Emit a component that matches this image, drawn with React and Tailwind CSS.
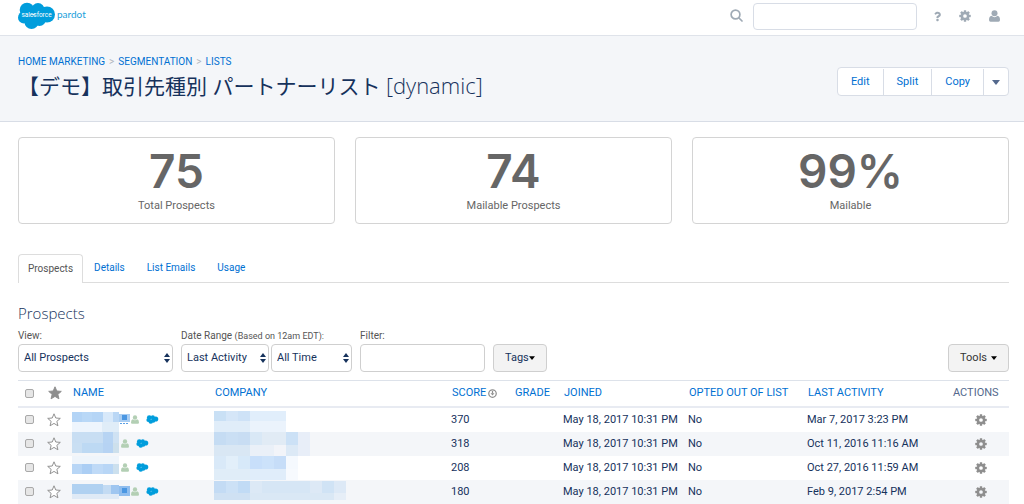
import React from 'react';
import { FaQuestion } from 'react-icons/fa';

const STATS = [
    { value: '75', label: 'Total Prospects' },
    { value: '74', label: 'Mailable Prospects' },
    { value: '99%', label: 'Mailable' }
];

const TABS = ['Details', 'List Emails', 'Usage'];

const GEAR_TEETH = [0, 45, 90, 135, 180, 225, 270, 315];

// Pixelated placeholders: each block is [x, y, width, height, color]
const PROSPECTS = [
    {
        score: 370,
        opted: 'No',
        joined: 'May 18, 2017 10:31 PM',
        lastActivity: 'Mar 7, 2017 3:23 PM',
        nameWidth: 58,
        name: [
            [0, 4, 10, 10, '#b3d4f6'], [10, 4, 10, 10, '#b9d8f7'], [20, 4, 11, 10, '#b5d5f6'],
            [31, 4, 10, 10, '#d8e9fa'], [41, 4, 6, 10, '#bad7f5'], [0, 14, 30, 10, '#eef5fd'],
            [30, 14, 17, 10, '#e0edf8'], [47, 6, 11, 8, '#a9cdf2'], [50, 7, 5, 5, '#4b97e2'],
            [48, 15, 2, 1, '#5a9fe4'], [51, 15, 2, 1, '#5a9fe4'], [54, 15, 2, 1, '#5a9fe4']
        ],
        company: [
            [0, 3, 12, 10, '#c9e0f5'], [12, 3, 12, 10, '#d5e6f8'], [24, 3, 12, 10, '#cee2f7'],
            [36, 3, 36, 10, '#e1eefb'], [0, 13, 36, 11, '#e0edf9'], [36, 13, 36, 11, '#ebf3fc']
        ]
    },
    {
        score: 318,
        opted: 'No',
        joined: 'May 18, 2017 10:31 PM',
        lastActivity: 'Oct 11, 2016 11:16 AM',
        nameWidth: 48,
        name: [
            [0, 0, 31, 11, '#c8def3'], [31, 0, 10, 11, '#b7d4f3'], [41, 0, 6, 11, '#cfe2f3'],
            [0, 11, 10, 10, '#c9dff3'], [10, 11, 21, 10, '#bdd9f3'], [31, 11, 10, 10, '#b6d3f3'],
            [41, 11, 6, 10, '#cde0ec']
        ],
        company: [
            [0, 0, 12, 13, '#c5dcf3'], [12, 0, 12, 13, '#cadff4'], [24, 0, 12, 13, '#c8ddf3'],
            [36, 0, 12, 13, '#d9e8f6'], [48, 0, 24, 13, '#e1ebf5'], [72, 0, 12, 13, '#cce1f6'],
            [84, 0, 12, 13, '#e8eef8'], [0, 13, 36, 11, '#d9e7f4'], [36, 13, 24, 11, '#eaf0f8'],
            [60, 13, 12, 11, '#f2f4f9'], [72, 13, 12, 11, '#dce9f6'], [84, 13, 12, 11, '#e8eef8']
        ]
    },
    {
        score: 208,
        opted: 'No',
        joined: 'May 18, 2017 10:31 PM',
        lastActivity: 'Oct 27, 2016 11:59 AM',
        nameWidth: 48,
        name: [
            [0, 0, 47, 8, '#eff5fb'], [0, 8, 10, 10, '#b8d6f6'], [10, 8, 10, 10, '#abcef4'],
            [20, 8, 11, 10, '#bfdaf7'], [31, 8, 10, 10, '#b8d6f6'], [41, 8, 6, 10, '#cce0ee']
        ],
        company: [
            [0, 0, 12, 13, '#d9e9f8'], [12, 0, 12, 13, '#e2effa'], [24, 0, 12, 13, '#d7e9f9'],
            [36, 0, 12, 13, '#c8dffa'], [48, 0, 12, 13, '#cce2fa'], [60, 0, 12, 13, '#c6ddf8'],
            [72, 0, 12, 13, '#f5f9fe'], [0, 13, 36, 11, '#e0edf8'], [36, 13, 36, 11, '#e0edfa'],
            [72, 13, 12, 11, '#f7fafe']
        ]
    },
    {
        score: 180,
        opted: 'No',
        joined: 'May 18, 2017 10:31 PM',
        lastActivity: 'Feb 9, 2017 2:54 PM',
        nameWidth: 58,
        name: [
            [0, 4, 31, 10, '#b0d1f1'], [31, 5, 8, 9, '#c3dbf3'], [39, 5, 8, 9, '#9fc6f0'],
            [47, 6, 11, 10, '#8fbdee'], [50, 8, 5, 5, '#4b97e2'], [0, 14, 47, 5, '#dfeaf6']
        ],
        company: [
            [0, 1, 12, 12, '#c3dbf4'], [12, 1, 12, 12, '#cce1f6'], [24, 1, 12, 12, '#c1dbf5'],
            [36, 1, 12, 12, '#dce9f6'], [48, 1, 48, 12, '#d6e6f5'], [96, 1, 12, 12, '#dde9f6'],
            [108, 1, 12, 12, '#d0e3f5'], [120, 1, 12, 12, '#dde9f6'], [0, 13, 36, 7, '#cfe1f3'],
            [36, 13, 84, 7, '#dae8f5'], [120, 13, 12, 7, '#e6eef7']
        ]
    }
];

function CloudShape() {
    return (
        <g fill="#009ddc">
            <circle cx="9" cy="8" r="7.3" />
            <circle cx="20" cy="7.5" r="6.5" />
            <circle cx="29" cy="12.5" r="8" />
            <circle cx="6" cy="15.5" r="6" />
            <circle cx="13.5" cy="20" r="7" />
            <circle cx="21.5" cy="17.5" r="6.5" />
        </g>
    );
}

function Gear({ className }) {
    return (
        <svg viewBox="0 0 24 24" className={className} fill="currentColor" aria-hidden="true">
            {GEAR_TEETH.map((angle) => (
                <rect key={angle} x="9.5" y="0.5" width="5" height="5" rx="0.8" transform={`rotate(${angle} 12 12)`} />
            ))}
            <circle cx="12" cy="12" r="6.2" fill="none" stroke="currentColor" strokeWidth="5" />
        </svg>
    );
}

function Person({ className }) {
    return (
        <svg viewBox="0 0 22 24" className={className} fill="currentColor" aria-hidden="true">
            <circle cx="11" cy="6.5" r="6" />
            <path d="M5 11.5 Q11 17 17 11.5 Q22 12.5 22 20 Q22 23.500 19 23.500 H3 Q0 23.500 0 20 Q0 12.500 5 11.500 Z" />
        </svg>
    );
}

function Star({ filled }) {
    return (
        <svg
            viewBox="0 0 26 26"
            className="block size-[14px]"
            fill={filled ? '#8e8e8e' : '#ffffff'}
            stroke="#8e8e8e"
            strokeWidth="1.8"
            strokeLinejoin="round"
            aria-hidden="true"
        >
            <path d="M13 1.500 L16.300 9.300 L24.700 10 L18.300 15.500 L20.300 23.800 L13 19.300 L5.700 23.800 L7.700 15.500 L1.300 10 L9.700 9.300 Z" />
        </svg>
    );
}

function Caret({ className }) {
    return (
        <svg viewBox="0 0 8 5" className={className} fill="currentColor" aria-hidden="true">
            <path d="M0 0 H8 L4 5 Z" />
        </svg>
    );
}

function Mosaic({ blocks, width }) {
    return (
        <svg width={width} height="24" className="block shrink-0" shapeRendering="crispEdges" aria-hidden="true">
            {blocks.map(([x, y, w, h, color], i) => (
                <rect key={i} x={x} y={y} width={w} height={h} fill={color} />
            ))}
        </svg>
    );
}

function SelectBox({ id, label, option, className }) {
    return (
        <div className={`relative ${className}`}>
            <select
                id={id}
                aria-label={label}
                className="block h-7 w-full appearance-none rounded border border-[#cfcfcf] bg-white pl-[5px] pr-4 text-[11px] text-[#16325c]"
            >
                <option>{option}</option>
            </select>
            <svg viewBox="0 0 6 10" className="pointer-events-none absolute right-[3px] top-[9px] h-[10px] w-[6px]" fill="#16325c" aria-hidden="true">
                <path d="M3 0 L6 4 H0 Z M0 6 H6 L3 10 Z" />
            </svg>
        </div>
    );
}

function Checkbox({ label }) {
    return (
        <input
            type="checkbox"
            aria-label={label}
            className="block size-[9px] appearance-none rounded-[2px] border border-[#a9a9a9] bg-[#e6e6e6]"
        />
    );
}

function TopBar() {
    return (
        <header className="flex h-9 items-center border-b border-[#dfe3ea] pl-[18px] pr-6">
            <a href="#" className="flex items-center gap-px pb-1" aria-label="Salesforce Pardot">
                <svg viewBox="0 0 38 28" className="h-7 w-[38px]" aria-hidden="true">
                    <CloudShape />
                    <text x="18.500" y="15" textAnchor="middle" fontSize="6.500" fill="#ffffff">salesforce</text>
                </svg>
                <span className="pb-1 font-['Lato',sans-serif] text-[10px] leading-[10px] text-[#1a9fdb]">pardot</span>
            </a>
            <div className="ml-auto flex items-center text-[#9faab5]">
                <svg viewBox="0 0 26 26" className="mb-1 mr-[10px] size-[13px]" fill="none" stroke="currentColor" strokeWidth="3.400" strokeLinecap="round" aria-hidden="true">
                    <circle cx="11" cy="11" r="8.800" />
                    <path d="M17.500 17.500 L24 24" />
                </svg>
                <input type="search" aria-label="Search" className="mb-[3px] mr-[17px] h-[27px] w-[164px] rounded border border-[#d8dde6] bg-white px-2 text-[11px]" />
                <button type="button" aria-label="Help" className="mb-[3px] mr-[18px]">
                    <FaQuestion className="h-[11px] w-[7px]" />
                </button>
                <button type="button" aria-label="Settings" className="mb-[3px] mr-[18px]">
                    <Gear className="size-3" />
                </button>
                <button type="button" aria-label="Account" className="mb-[3px]">
                    <Person className="h-3 w-[11px]" />
                </button>
            </div>
        </header>
    );
}

function PageHeader() {
    return (
        <div className="flex justify-between border-b border-[#d8dde6] bg-[#f4f6f9] pb-[19px] pl-[18px] pr-[15px] pt-[19px]">
            <div>
                <nav aria-label="Breadcrumb" className="flex gap-1 text-[10px] leading-[14px] text-[#0070d2]">
                    <a href="#">HOME MARKETING</a>
                    <span className="text-[#b0b5bd]">&gt;</span>
                    <a href="#">SEGMENTATION</a>
                    <span className="text-[#b0b5bd]">&gt;</span>
                    <a href="#">LISTS</a>
                </nav>
                <h1 className="whitespace-nowrap font-['Open_Sans','Noto_Sans_CJK_JP',sans-serif] text-[21px] leading-8 text-[#16325c]">
                    【デモ】取引先種別 パートナーリスト <span className="text-[22px] font-light">[dynamic]</span>
                </h1>
            </div>
            <div className="mt-3 flex h-[29px] divide-x divide-[#d8dde6] rounded border border-[#d8dde6] bg-white pt-px text-[11px] text-[#0070d2]">
                <button type="button" className="px-[13px]">Edit</button>
                <button type="button" className="px-[13px]">Split</button>
                <button type="button" className="px-[13px]">Copy</button>
                <button type="button" aria-label="More actions" className="px-2">
                    <Caret className="h-[5px] w-2 text-[#54698d]" />
                </button>
            </div>
        </div>
    );
}

function Filters() {
    return (
        <div className="flex items-end gap-2 text-[10px] leading-[14px] text-[#555555]">
            <div className="w-[155px]">
                <label htmlFor="view">View:</label>
                <SelectBox id="view" option="All Prospects" className="mt-px w-full" />
            </div>
            <div>
                <label htmlFor="range-type">
                    Date Range <span className="text-[9px]">(Based on 12am EDT):</span>
                </label>
                <div className="mt-px flex gap-[2px]">
                    <SelectBox id="range-type" option="Last Activity" className="w-[88px]" />
                    <SelectBox id="range" label="Date period" option="All Time" className="w-[81px]" />
                </div>
            </div>
            <div>
                <label htmlFor="filter">Filter:</label>
                <input id="filter" type="text" className="mt-px block h-7 w-[125px] rounded border border-[#cfcfcf] bg-white px-2" />
            </div>
            <button type="button" className="flex h-7 items-center rounded border border-[#cfcfcf] bg-[#f3f3f3] px-[11px] text-[11px] text-[#16325c]">
                Tags
                <Caret className="h-1 w-[6px] text-black" />
            </button>
            <button type="button" className="ml-auto flex h-7 items-center gap-1 rounded border border-[#cfcfcf] bg-[#f3f3f3] px-[11px] text-[11px] text-[#333333]">
                Tools
                <Caret className="h-1 w-[6px] text-black" />
            </button>
        </div>
    );
}

function ProspectTable() {
    return (
        <table className="mt-2 w-full table-fixed whitespace-nowrap border-t border-[#dde2ea] text-left text-[11px] text-[#16325c]">
            <colgroup>
                <col className="w-[27px]" />
                <col className="w-[25px]" />
                <col className="w-[142px]" />
                <col />
                <col className="w-[63px]" />
                <col className="w-[49px]" />
                <col className="w-[125px]" />
                <col className="w-[119px]" />
                <col className="w-[145px]" />
                <col className="w-[59px]" />
            </colgroup>
            <thead>
                <tr className="h-[26px] border-b-2 border-[#e8ebf2] text-[#0070d2] [&>th]:p-0 [&>th]:pl-[3px] [&>th]:font-normal">
                    <th><div className="pl-1"><Checkbox label="Select all" /></div></th>
                    <th><Star filled /></th>
                    <th><a href="#">NAME</a></th>
                    <th><a href="#">COMPANY</a></th>
                    <th>
                        <a href="#" className="flex items-center gap-[2px]">
                            SCORE
                            <svg viewBox="0 0 18 18" className="size-[9px]" fill="none" stroke="#8e8e8e" strokeWidth="2.500" aria-hidden="true">
                                <circle cx="9" cy="9" r="7.500" />
                                <path d="M9 4 V9" />
                                <path d="M5 8.500 H13 L9 13 Z" fill="#8e8e8e" stroke="none" />
                            </svg>
                        </a>
                    </th>
                    <th><a href="#">GRADE</a></th>
                    <th><a href="#">JOINED</a></th>
                    <th><a href="#">OPTED OUT OF LIST</a></th>
                    <th><a href="#">LAST ACTIVITY</a></th>
                    <th className="text-[#54698d]">ACTIONS</th>
                </tr>
            </thead>
            <tbody>
                {PROSPECTS.map((row) => (
                    <tr key={row.score} className="h-6 leading-6 even:bg-[#f4f6f9] [&>td]:p-0 [&>td]:pl-[2px]">
                        <td><div className="pl-[5px]"><Checkbox label={`Select prospect with score ${row.score}`} /></div></td>
                        <td>
                            <button type="button" aria-label="Star prospect" className="block"><Star /></button>
                        </td>
                        <td>
                            <div className="flex items-center">
                                <Mosaic blocks={row.name} width={row.nameWidth} />
                                <Person className="ml-px mr-[7px] h-[9px] w-2 text-[#b3cfb4]" />
                                <svg viewBox="0 0 38 28" className="h-[9px] w-[13px]" aria-hidden="true"><CloudShape /></svg>
                            </div>
                        </td>
                        <td><Mosaic blocks={row.company} width={132} /></td>
                        <td>{row.score}</td>
                        <td />
                        <td>{row.joined}</td>
                        <td>{row.opted}</td>
                        <td>{row.lastActivity}</td>
                        <td>
                            <button type="button" aria-label="Prospect actions" className="mx-auto block text-[#8e8e8e]">
                                <Gear className="size-3" />
                            </button>
                        </td>
                    </tr>
                ))}
            </tbody>
        </table>
    );
}

export default function App() {
    return (
        <div className="bg-white font-['Roboto','Noto_Sans_CJK_JP',sans-serif]">
            <TopBar />
            <PageHeader />
            <main className="pb-1 pl-[18px] pr-[15px] pt-[15px]">
                <div className="grid grid-cols-3 gap-5">
                    {STATS.map((stat) => (
                        <div key={stat.label} className="rounded border border-[#d4d4d4] pb-[9px] pt-[7px] text-center text-[#666666]">
                            <div className="font-['Inter',sans-serif] text-[46px] font-semibold leading-[52px]">{stat.value}</div>
                            <div className="mt-px text-[11px] leading-4">{stat.label}</div>
                        </div>
                    ))}
                </div>

                <nav aria-label="List sections" className="mt-[30px] flex border-b border-[#dddddd] text-[10px] leading-7 text-[#0070d2]">
                    <a href="#" className="-mb-px rounded-t border border-b-0 border-[#dddddd] bg-white px-[9px] text-[#555555]">Prospects</a>
                    {TABS.map((tab) => (
                        <a key={tab} href="#" className="px-[11px]">{tab}</a>
                    ))}
                </nav>

                <h2 className="mt-5 font-['Open_Sans',sans-serif] text-[15px] font-light leading-5 text-[#16325c]">Prospects</h2>
                <div className="mt-[6px]">
                    <Filters />
                </div>
                <ProspectTable />
            </main>
        </div>
    );
}
